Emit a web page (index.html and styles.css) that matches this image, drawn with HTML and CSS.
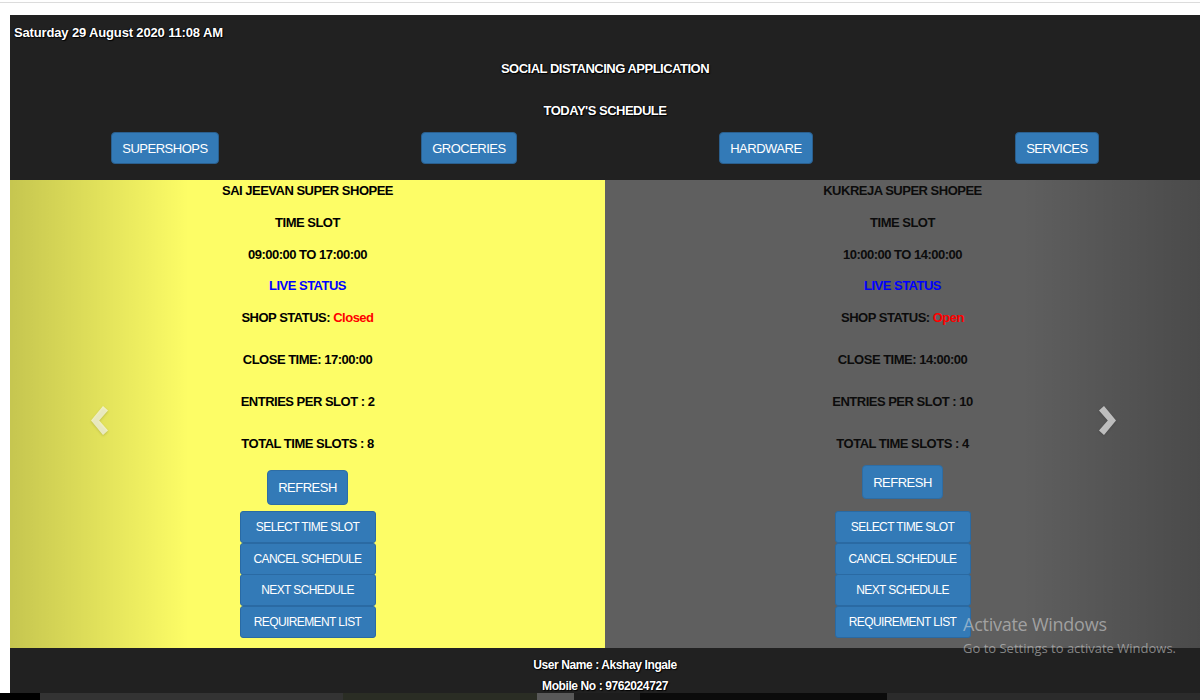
FILE: index.html
```html
<!DOCTYPE html>
<html lang="en">
<head>
<meta charset="utf-8">
<title>Social Distancing Application</title>
<link rel="stylesheet" href="styles.css">
</head>
<body>
<div class="topline"></div>
<div class="app">
  <header class="hdr">
    <div class="date">Saturday 29 August 2020 11:08 AM</div>
    <h1 class="title">SOCIAL DISTANCING APPLICATION</h1>
    <h2 class="subtitle">TODAY'S SCHEDULE</h2>
    <nav class="cats">
      <button class="btn btn-cat">SUPERSHOPS</button>
      <button class="btn btn-cat">GROCERIES</button>
      <button class="btn btn-cat">HARDWARE</button>
      <button class="btn btn-cat">SERVICES</button>
    </nav>
  </header>

  <section class="carousel">
    <div class="slide slide-yellow">
      <div class="ln">SAI JEEVAN SUPER SHOPEE</div>
      <div class="ln s">TIME SLOT</div>
      <div class="ln s">09:00:00 TO 17:00:00</div>
      <div class="ln s live">LIVE STATUS</div>
      <div class="ln s">SHOP STATUS: <span class="st">Closed</span></div>
      <div class="ln l">CLOSE TIME: 17:00:00</div>
      <div class="ln l">ENTRIES PER SLOT : 2</div>
      <div class="ln l">TOTAL TIME SLOTS : 8</div>
      <button class="btn btn-refresh refresh-a">REFRESH</button>
      <div class="group group-a">
        <button class="btn btn-sm">SELECT TIME SLOT</button>
        <button class="btn btn-sm">CANCEL SCHEDULE</button>
        <button class="btn btn-sm">NEXT SCHEDULE</button>
        <button class="btn btn-sm">REQUIREMENT LIST</button>
      </div>
    </div>

    <div class="slide slide-gray">
      <div class="ln">KUKREJA SUPER SHOPEE</div>
      <div class="ln s">TIME SLOT</div>
      <div class="ln s">10:00:00 TO 14:00:00</div>
      <div class="ln s live">LIVE STATUS</div>
      <div class="ln s">SHOP STATUS: <span class="st">Open</span></div>
      <div class="ln l">CLOSE TIME: 14:00:00</div>
      <div class="ln l">ENTRIES PER SLOT : 10</div>
      <div class="ln l">TOTAL TIME SLOTS : 4</div>
      <button class="btn btn-refresh refresh-b">REFRESH</button>
      <div class="group group-b">
        <button class="btn btn-sm">SELECT TIME SLOT</button>
        <button class="btn btn-sm">CANCEL SCHEDULE</button>
        <button class="btn btn-sm">NEXT SCHEDULE</button>
        <button class="btn btn-sm">REQUIREMENT LIST</button>
      </div>
    </div>

    <a class="ctrl ctrl-left" href="#" aria-label="Previous">
      <svg class="chev" width="17" height="29" viewBox="0 0 17 29"><polygon points="12,0 17,4.6 8.2,14.5 17,24.4 12,29 0,14.5"/></svg>
    </a>
    <a class="ctrl ctrl-right" href="#" aria-label="Next">
      <svg class="chev" width="17" height="29" viewBox="0 0 17 29"><polygon points="5,0 0,4.6 8.8,14.5 0,24.4 5,29 17,14.5"/></svg>
    </a>
  </section>

  <footer class="ftr">
    <div class="fl">User Name : Akshay Ingale</div>
    <div class="fl">Mobile No : 9762024727</div>
  </footer>
</div>

<div class="taskbar">
  <span class="tb tb1"></span>
  <span class="tb tb2"></span>
  <span class="tb tb3"></span>
  <span class="tb tb4"></span>
  <span class="tb tb5"></span>
  <span class="tb tb6"></span>
  <span class="tb tb7"></span>
</div>

<div class="watermark">
  <div class="wm1">Activate Windows</div>
  <div class="wm2">Go to Settings to activate Windows.</div>
</div>
</body>
</html>
```

FILE: styles.css
```css
* { box-sizing: border-box; }

html, body {
  margin: 0;
  padding: 0;
  height: 700px;
  overflow: hidden;
  background: #ffffff;
  font-family: "Liberation Sans", Arial, Helvetica, sans-serif;
}

.topline {
  margin-top: 2px;
  height: 13px;
  border-top: 1px solid #dcdcdc;
}

.app {
  margin-left: 10px;
  background: #212121;
  position: relative;
}

/* ---------- header ---------- */
.hdr {
  height: 165px;
  display: flex;
  flex-direction: column;
  color: #ffffff;
}

.date {
  margin-top: 8px;
  padding-left: 4px;
  height: 20px;
  line-height: 20px;
  font-size: 13px;
  font-weight: bold;
  letter-spacing: -0.15px;
  text-shadow: 1px 1px 1px #000, -1px 0 1px #000;
}

.title,
.subtitle {
  margin: 0;
  height: 20px;
  line-height: 20px;
  text-align: center;
  font-size: 13px;
  font-weight: bold;
  letter-spacing: -0.5px;
  text-shadow: 1px 1px 1px #000, -1px 0 1px #000;
}

.title { margin-top: 16px; }
.subtitle { margin-top: 22px; }

.cats {
  margin-top: 11px;
  display: flex;
  justify-content: space-around;
}

/* ---------- buttons ---------- */
.btn {
  font-family: "Liberation Sans", Arial, Helvetica, sans-serif;
  color: #ffffff;
  background: #337ab7;
  border: 1px solid #2e6da4;
  border-radius: 4px;
  cursor: pointer;
  display: flex;
  align-items: center;
  justify-content: center;
  white-space: nowrap;
  padding: 0 10px;
}

.btn-cat {
  height: 32px;
  font-size: 13px;
  letter-spacing: -0.5px;
  border-color: #2a5f8e;
}

.btn-refresh {
  font-size: 13px;
  letter-spacing: -0.5px;
}

.refresh-a { height: 35px; margin-top: 16px; }
.refresh-b { height: 34px; margin-top: 11px; }

.group {
  display: flex;
  flex-direction: column;
  width: 136px;
}

.group-a { margin-top: 6px; }
.group-b { margin-top: 12px; }

.btn-sm {
  height: 32px;
  font-size: 12px;
  letter-spacing: -0.6px;
  border-radius: 3px;
  border-color: #2a6aa3;
  padding: 0 4px;
}

.btn-sm + .btn-sm { margin-top: -0.5px; }

/* ---------- carousel ---------- */
.carousel {
  position: relative;
  height: 468px;
  display: grid;
  grid-template-columns: 1fr 1fr;
}

.slide {
  display: flex;
  flex-direction: column;
  align-items: center;
  padding-top: 1px;
  color: #000000;
}

.slide-yellow { background: #fdfd66; }
.slide-gray { background: #5f5f5f; color: #0c0c0c; }

.ln {
  height: 20px;
  line-height: 20px;
  font-size: 13px;
  font-weight: bold;
  letter-spacing: -0.5px;
  white-space: nowrap;
}

.ln.s { margin-top: 11.75px; }
.ln.l { margin-top: 22px; }

.live { color: #0000ff; }
.st { color: #ff0000; }

.ctrl {
  position: absolute;
  top: 0;
  bottom: 0;
  width: 15%;
  display: flex;
  align-items: center;
  justify-content: center;
  padding-top: 12px;
}

.ctrl-left {
  left: 0;
  background: linear-gradient(to right, rgba(0, 0, 0, 0.22), rgba(0, 0, 0, 0));
}

.ctrl-right {
  right: 0;
  background: linear-gradient(to left, rgba(0, 0, 0, 0.22), rgba(0, 0, 0, 0));
  padding-right: 6px;
}

.chev {
  fill: rgba(255, 255, 255, 0.64);
  filter: drop-shadow(0 1px 1px rgba(0, 0, 0, 0.25));
}

/* ---------- footer ---------- */
.ftr {
  height: 45px;
  padding-top: 7px;
  color: #ffffff;
  text-align: center;
}

.fl {
  height: 21px;
  line-height: 21px;
  font-size: 12px;
  font-weight: bold;
  letter-spacing: -0.4px;
  text-shadow: 1px 1px 1px #000, -1px 0 1px #000;
}

/* ---------- bottom strip ---------- */
.taskbar {
  display: flex;
  height: 7px;
}

.tb { display: block; height: 7px; }
.tb1 { width: 40px; background: #000000; }
.tb2 { width: 303px; background: #333333; }
.tb3 { width: 194px; background: #2a2d24; }
.tb4 { width: 37px; background: #585858; }
.tb5 { width: 66px; background: #1d1d1d; }
.tb6 { width: 247px; background: #0b0b0b; }
.tb7 { flex: 1; background: #2b2b2b; }

/* ---------- Windows watermark overlay ---------- */
.watermark {
  position: absolute;
  left: 963px;
  top: 611px;
  color: rgba(220, 220, 220, 0.55);
  font-family: "Open Sans", "Noto Sans", sans-serif;
  pointer-events: none;
}

.wm1 {
  font-size: 18px;
  line-height: 26px;
  letter-spacing: -0.25px;
}

.wm2 {
  font-size: 13px;
  line-height: 22px;
  letter-spacing: 0;
}
```
